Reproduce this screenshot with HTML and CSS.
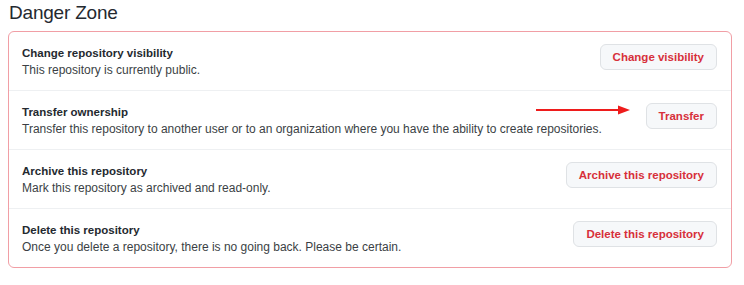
FILE: index.html
```html
<!DOCTYPE html>
<html lang="en">
<head>
    <meta charset="UTF-8">
    <meta name="viewport" content="width=device-width, initial-scale=1.0">
    <title>Danger Zone</title>
    <link rel="stylesheet" href="styles.css">
</head>
<body>
    <div class="settings">
        <h2 class="section-title">Danger Zone</h2>

        <div class="danger-box">
            <div class="danger-row">
                <div class="row-text">
                    <strong>Change repository visibility</strong>
                    <p>This repository is currently public.</p>
                </div>
                <button class="btn-danger">Change visibility</button>
            </div>

            <div class="danger-row">
                <div class="row-text">
                    <strong>Transfer ownership</strong>
                    <p>Transfer this repository to another user or to an organization where you have the ability to create repositories.</p>
                </div>
                <button class="btn-danger">Transfer</button>
                <!-- annotation arrow from the screenshot -->
                <svg class="arrow" width="94" height="10" viewBox="0 0 94 10">
                    <line x1="0" y1="5" x2="84" y2="5" stroke="#ee1c1c" stroke-width="2"/>
                    <polygon points="82,0.5 94,5 82,9.5" fill="#ee1c1c"/>
                </svg>
            </div>

            <div class="danger-row">
                <div class="row-text">
                    <strong>Archive this repository</strong>
                    <p>Mark this repository as archived and read-only.</p>
                </div>
                <button class="btn-danger">Archive this repository</button>
            </div>

            <div class="danger-row">
                <div class="row-text">
                    <strong>Delete this repository</strong>
                    <p>Once you delete a repository, there is no going back. Please be certain.</p>
                </div>
                <button class="btn-danger">Delete this repository</button>
            </div>
        </div>
    </div>
</body>
</html>
```

FILE: styles.css
```css
body {
    font-family: "Liberation Sans", Arial, sans-serif;
    background-color: #ffffff;
    margin: 0;
    color: #24292f;
}

.settings {
    padding: 0 12px 0 8px;
}

.section-title {
    font-size: 19px;
    font-weight: 400;
    letter-spacing: -0.2px;
    margin: 0;
    padding: 1px 0 0 1px;
    line-height: 24px;
    height: 30px;
}

.danger-box {
    border: 1px solid #f19ea5;
    border-radius: 6px;
}

.danger-row {
    position: relative;
    display: flex;
    justify-content: space-between;
    align-items: flex-start;
    height: 58px;
    padding: 0 14px 0 13px;
    border-top: 1px solid #eef0f2;
}

.danger-row:first-child {
    border-top: none;
}

.row-text {
    padding-top: 13px;
}

.row-text strong {
    display: block;
    font-size: 11.5px;
    font-weight: 700;
    line-height: 17px;
}

.row-text p {
    font-size: 12px;
    margin: 0;
    line-height: 17px;
    color: #3b3f45;
}

.btn-danger {
    margin-top: 12px;
    height: 26px;
    padding: 0 12px;
    font-family: inherit;
    font-size: 11.5px;
    font-weight: 700;
    color: #d7303b;
    background-color: #f6f8fa;
    border: 1px solid #dfe2e5;
    border-radius: 6px;
    cursor: pointer;
    white-space: nowrap;
}

.arrow {
    position: absolute;
    left: 527px;
    top: 14px;
}
```
